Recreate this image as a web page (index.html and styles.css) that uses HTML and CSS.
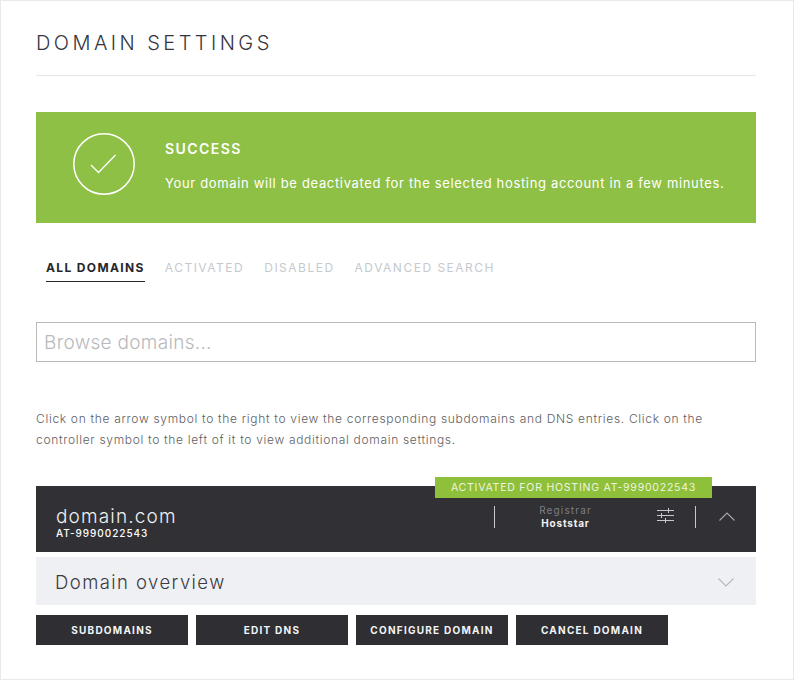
FILE: index.html
```html
<!DOCTYPE html>
<html lang="en">
<head>
<meta charset="utf-8">
<title>Domain Settings</title>
<link rel="stylesheet" href="styles.css">
</head>
<body>
<main class="page">
  <h1 class="title">DOMAIN SETTINGS</h1>
  <section class="notice">
    <svg class="notice-icon" width="64" height="64" viewBox="0 0 64 64" aria-hidden="true">
      <circle cx="32" cy="32" r="30.2" fill="none" stroke="#fff" stroke-width="1.5"/>
      <path d="M19 33l7.500 7.500L43.500 23" fill="none" stroke="#fff" stroke-width="1.300"/>
    </svg>
    <div class="notice-body">
      <h2 class="notice-title">SUCCESS</h2>
      <p class="notice-text">Your domain will be deactivated for the selected hosting account in a few minutes.</p>
    </div>
  </section>
  <nav class="tabs">
    <a class="tab tab-active">ALL DOMAINS</a>
    <a class="tab">ACTIVATED</a>
    <a class="tab">DISABLED</a>
    <a class="tab">ADVANCED SEARCH</a>
  </nav>
  <input class="search" type="text" placeholder="Browse domains...">
  <p class="help">Click on the arrow symbol to the right to view the corresponding subdomains and DNS entries. Click on the controller symbol to the left of it to view additional domain settings.</p>
  <section class="domain">
    <span class="badge">ACTIVATED FOR HOSTING AT-9990022543</span>
    <div class="domain-name">
      <div class="domain-title">domain.com</div>
      <div class="domain-id">AT-9990022543</div>
    </div>
    <div class="registrar">
      <div class="registrar-label">Registrar</div>
      <div class="registrar-value">Hoststar</div>
    </div>
    <svg class="sliders" width="17" height="15" viewBox="0 0 17 15" aria-hidden="true">
      <path d="M0 2.500h17M0 7.500h17M0 12.500h17M11.500 0v5M4.500 5v5M8.500 10v5" fill="none" stroke="#c8c8ca" stroke-width="1"/>
    </svg>
    <div class="toggle">
      <svg width="16" height="9" viewBox="0 0 16 9" aria-hidden="true">
        <path d="M.5 8.500L8 1l7.500 7.500" fill="none" stroke="#a9a9ac" stroke-width="1.100"/>
      </svg>
    </div>
  </section>
  <section class="overview">
    <span class="overview-title">Domain overview</span>
    <svg width="16" height="9" viewBox="0 0 16 9" aria-hidden="true">
      <path d="M.5 .5L8 8l7.500-7.500" fill="none" stroke="#b6b6bb" stroke-width="1.100"/>
    </svg>
  </section>
  <div class="actions">
    <button class="action">SUBDOMAINS</button>
    <button class="action">EDIT DNS</button>
    <button class="action">CONFIGURE DOMAIN</button>
    <button class="action">CANCEL DOMAIN</button>
  </div>
</main>
</body>
</html>
```
FILE: styles.css
```css
* { box-sizing: border-box; }
html, body { margin: 0; padding: 0; background: #fff; }
body { font-family: Inter, "Liberation Sans", sans-serif; color: #2e2e33; }
.page {
  width: 794px;
  height: 680px;
  border: 1px solid #e9e9e9;
  padding: 0 37px 0 35px;
  overflow: hidden;
}
.title {
  margin: 0;
  height: 75px;
  padding-top: 30px;
  border-bottom: 1px solid #e6e6e6;
  font-size: 20px;
  line-height: 24px;
  font-weight: 300;
  letter-spacing: 3.450px;
  color: #35353b;
}
.notice {
  margin-top: 36px;
  height: 111px;
  background: #8fc046;
  color: #fff;
  display: flex;
  align-items: center;
  padding-left: 36px;
  gap: 29px;
}
.notice-icon { flex: none; margin-top: -7px; }
.notice-title {
  margin: 0;
  font-size: 14px;
  line-height: 18px;
  font-weight: 600;
  letter-spacing: 1.450px;
}
.notice-text {
  margin: 16px 0 0;
  font-size: 13px;
  line-height: 18px;
  font-weight: 400;
  letter-spacing: .66px;
  white-space: nowrap;
}
.notice-body { margin-top: -4px; }
.tabs {
  margin-top: 34px;
  padding-left: 10px;
  display: flex;
  gap: 20px;
  height: 25px;
}
.tab {
  font-size: 12px;
  line-height: 21px;
  letter-spacing: 1.500px;
  color: #c6c9cd;
  font-weight: 400;
}
.tab-active {
  color: #26262b;
  font-weight: 700;
  letter-spacing: 1.360px;
  border-bottom: 1px solid #26262b;
  height: 25px;
}
.search {
  display: block;
  margin-top: 40px;
  width: 100%;
  height: 40px;
  border: 1px solid #b9b9b9;
  border-radius: 0;
  padding: 0 7px;
  font-family: inherit;
  font-size: 19px;
  font-weight: 300;
  letter-spacing: .3px;
  outline: none;
}
.search::placeholder { color: #b9b9bd; opacity: 1; }
.help {
  margin: 46px 0 0;
  font-size: 12px;
  line-height: 21px;
  font-weight: 300;
  letter-spacing: .68px;
  color: #5e5e62;
}
.domain {
  position: relative;
  margin-top: 36px;
  height: 66px;
  background: #303035;
  color: #fff;
  display: flex;
  align-items: flex-start;
}
.badge {
  position: absolute;
  left: 399px;
  top: -9px;
  width: 277px;
  height: 21px;
  background: #8fc03c;
  font-size: 10.500px;
  line-height: 22px;
  text-align: center;
  letter-spacing: .78px;
  color: #eef5df;
  white-space: nowrap;
}
.domain-name { padding: 20px 0 0 20px; width: 458px; height: 46px; }
.domain-title {
  font-size: 19px;
  line-height: 22px;
  font-weight: 300;
  letter-spacing: 1.150px;
  color: #f1f1f1;
}
.domain-id {
  font-size: 10px;
  line-height: 10px;
  letter-spacing: .96px;
  font-weight: 500;
}
.registrar {
  margin-top: 20px;
  width: 142px;
  height: 22px;
  border-left: 1px solid #c8c8ca;
  text-align: center;
}
.registrar-label {
  margin-top: -2px;
  font-size: 10px;
  line-height: 13px;
  letter-spacing: 1.150px;
  color: #7f7f83;
}
.registrar-value {
  font-size: 10px;
  line-height: 13px;
  font-weight: 700;
  letter-spacing: .8px;
  color: #f0f0f0;
}
.sliders { margin: 22px 0 0 21px; flex: none; }
.toggle {
  margin: 20px 0 0 21px;
  height: 22px;
  width: 61px;
  border-left: 1px solid #c8c8ca;
  padding: 6px 0 0 23px;
  line-height: 0;
}
.overview {
  margin-top: 5px;
  height: 48px;
  background: #eff0f4;
  display: flex;
  align-items: center;
  justify-content: space-between;
  padding: 0 22px 0 19px;
}
.overview-title {
  margin-top: 2px;
  font-size: 18.500px;
  line-height: 22px;
  font-weight: 300;
  letter-spacing: 1.430px;
  color: #3b3b40;
}
.overview svg { margin-top: 2px; }
.actions { margin-top: 10px; display: flex; gap: 8px; }
.action {
  width: 152px;
  height: 30px;
  border: 0;
  border-radius: 0;
  padding: 0;
  background: #2e2e33;
  color: #f3f5f8;
  font-family: inherit;
  font-size: 10px;
  font-weight: 700;
  letter-spacing: 1.250px;
}
```
